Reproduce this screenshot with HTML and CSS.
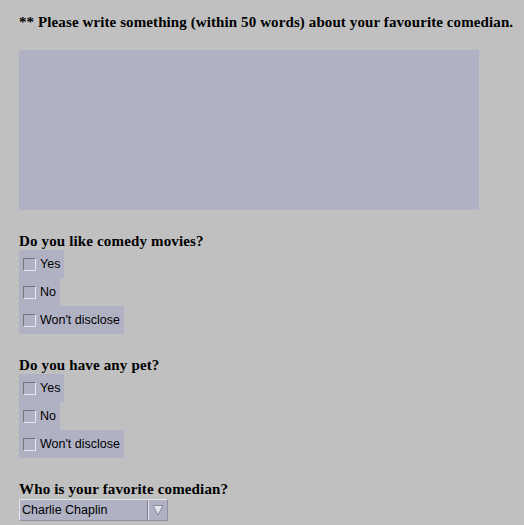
FILE: index.html
```html
<!DOCTYPE html>
<html>
<head>
<meta charset="utf-8">
<link rel="stylesheet" href="styles.css">
</head>
<body>
<form class="form">
  <p class="heading">** Please write something (within 50 words) about your favourite comedian.</p>
  <textarea class="area"></textarea>

  <p class="question q-first">Do you like comedy movies?</p>
  <div class="group">
    <label class="opt"><input type="checkbox" class="box"><span>Yes</span></label>
    <label class="opt"><input type="checkbox" class="box"><span>No</span></label>
    <label class="opt"><input type="checkbox" class="box"><span>Won't disclose</span></label>
  </div>

  <p class="question">Do you have any pet?</p>
  <div class="group">
    <label class="opt"><input type="checkbox" class="box"><span>Yes</span></label>
    <label class="opt"><input type="checkbox" class="box"><span>No</span></label>
    <label class="opt"><input type="checkbox" class="box"><span>Won't disclose</span></label>
  </div>

  <p class="question">Who is your favorite comedian?</p>
  <div class="select">
    <span class="select-text">Charlie Chaplin</span>
    <span class="select-btn">
      <svg width="12" height="12" viewBox="0 0 12 12"><path d="M1 1.5 L11 1.5 L6 11 Z" fill="#e4e4ec" stroke="#8a8a96" stroke-width="1"/></svg>
    </span>
  </div>
</form>
</body>
</html>
```

FILE: styles.css
```css
html, body {
  margin: 0;
  padding: 0;
  background: #c0c0c0;
}
.form {
  display: flex;
  flex-direction: column;
  align-items: flex-start;
  padding: 14px 0 0 19px;
}
.heading {
  margin: 0;
  font-family: "Liberation Serif", "DejaVu Serif", serif;
  font-weight: bold;
  font-size: 15px;
  letter-spacing: 0.1px;
  line-height: 17px;
  color: #000;
  white-space: nowrap;
}
.area {
  margin-top: 19px;
  width: 460px;
  height: 160px;
  box-sizing: border-box;
  border: none;
  padding: 0;
  background: #b0b2c4;
  resize: none;
  display: block;
}
.question {
  margin: 23px 0 1px 0;
  font-family: "Liberation Serif", "DejaVu Serif", serif;
  font-weight: bold;
  font-size: 15px;
  letter-spacing: 0.15px;
  line-height: 16px;
  color: #000;
}
.group {
  display: flex;
  flex-direction: column;
  align-items: flex-start;
}
.opt {
  display: flex;
  align-items: center;
  height: 28px;
  padding: 0 4px;
  gap: 4px;
  background: #b0b2c4;
  font-family: "Liberation Sans", Arial, sans-serif;
  font-size: 12.5px;
  color: #000;
}
.box {
  appearance: none;
  -webkit-appearance: none;
  margin: 0;
  width: 13px;
  height: 13px;
  box-sizing: border-box;
  border-top: 1px solid #74747e;
  border-left: 1px solid #74747e;
  border-bottom: 1px solid #eaeaf0;
  border-right: 1px solid #eaeaf0;
  background: #b0b2c4;
}
.select {
  margin-top: 1px;
  display: flex;
  width: 149px;
  height: 22px;
  box-sizing: border-box;
  background: #b0b2c4;
  border-top: 1px solid #e6e6ee;
  border-left: 1px solid #e6e6ee;
  border-bottom: 1px solid #9090a0;
  border-right: 1px solid #9090a0;
  font-family: "Liberation Sans", Arial, sans-serif;
  font-size: 12.5px;
  color: #000;
}
.select-text {
  flex: 1;
  display: flex;
  align-items: center;
  padding-left: 2px;
}
.select-btn {
  width: 19px;
  display: flex;
  align-items: center;
  justify-content: center;
  border-left: 1px solid #7c7c88;
  box-shadow: inset 1px 0 0 #e6e6ee;
}
```
